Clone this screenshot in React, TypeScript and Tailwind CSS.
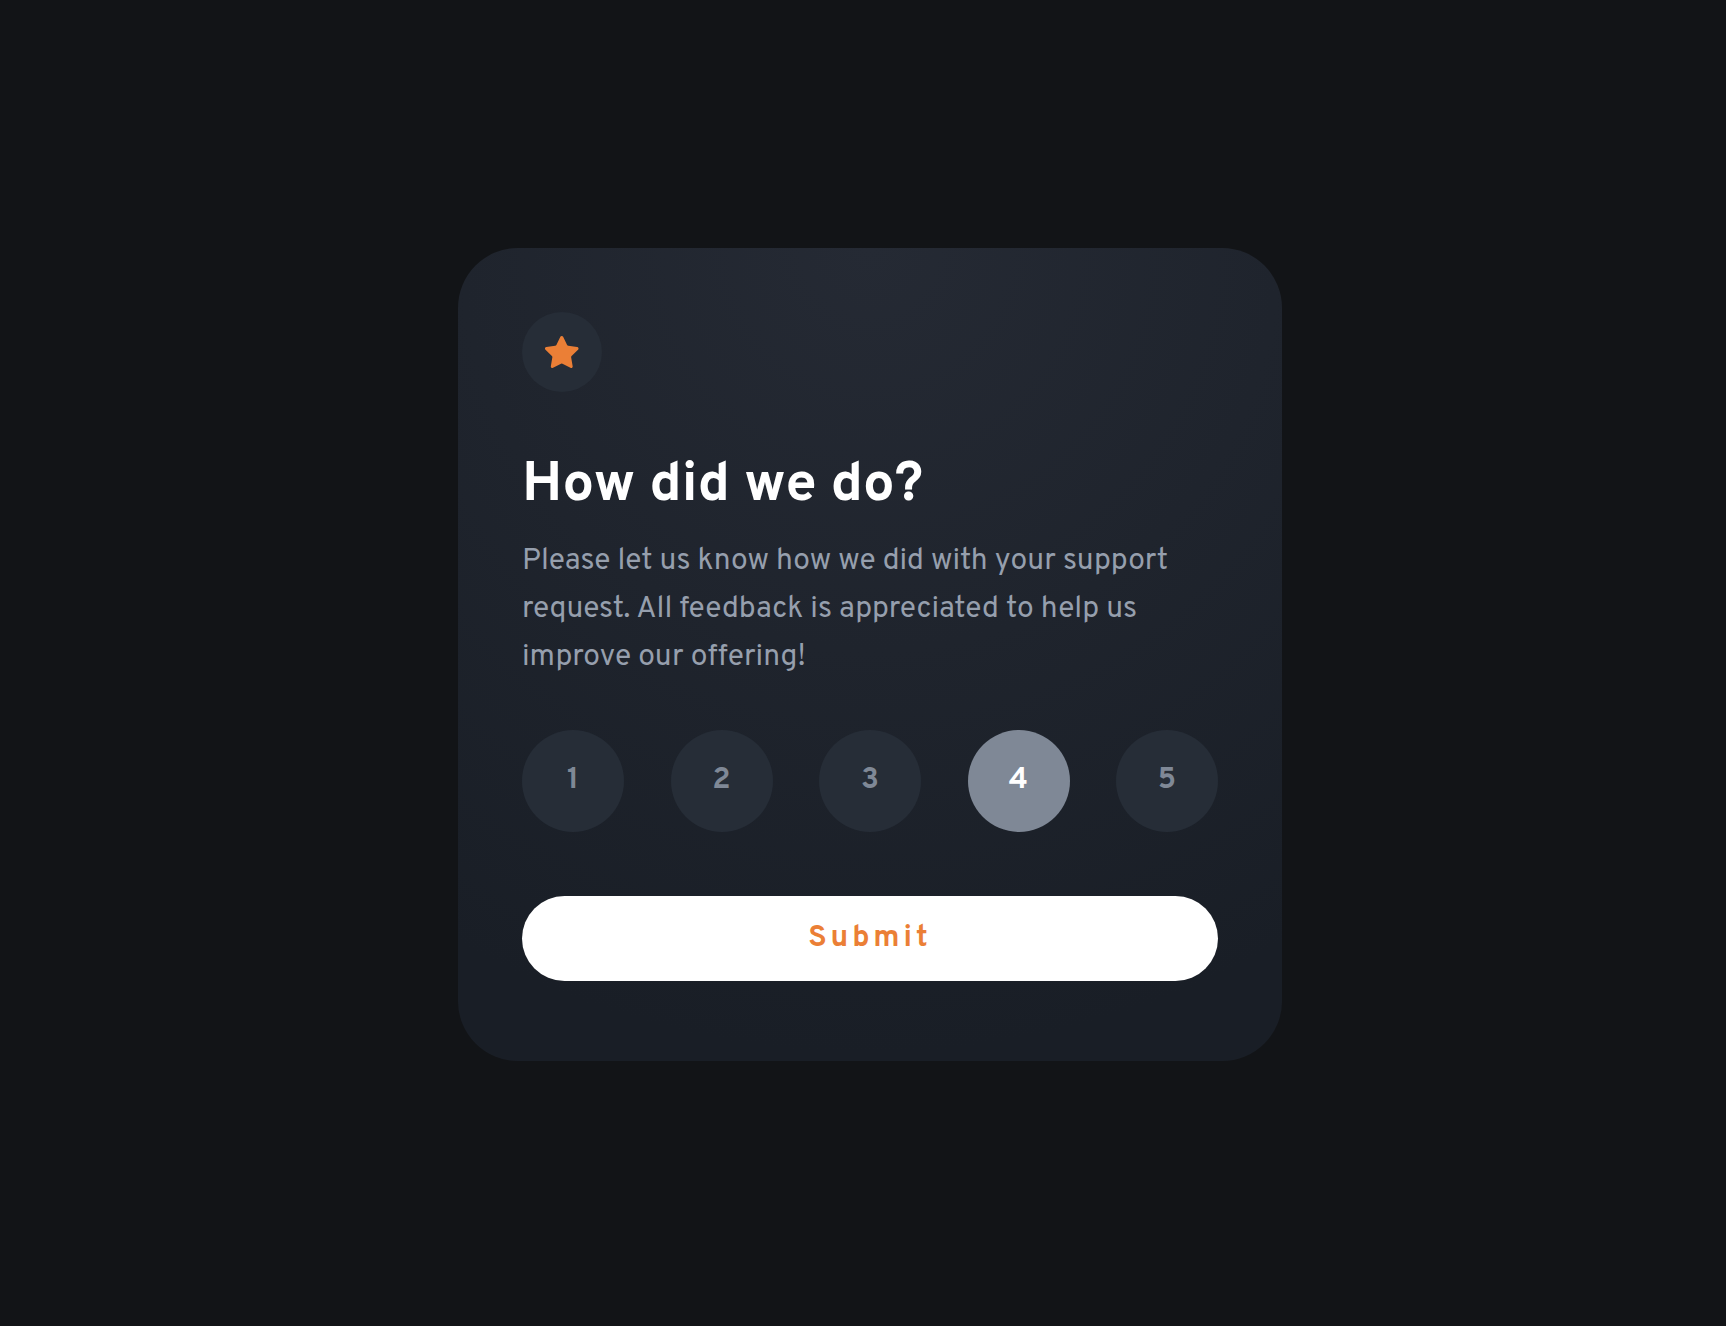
import { useState } from "react";

const ratings = [1, 2, 3, 4, 5];

function StarIcon() {
  return (
    <svg viewBox="0 0 17 16" className="h-8 w-[34px]" fill="#eb7f36" aria-hidden="true">
      <path d="m9.067.43 1.99 4.031c.112.228.33.386.58.422l4.45.647a.772.772 0 0 1 .427 1.316l-3.22 3.138a.773.773 0 0 0-.222.683l.76 4.431a.772.772 0 0 1-1.12.813l-3.98-2.092a.773.773 0 0 0-.718 0l-3.98 2.092a.772.772 0 0 1-1.119-.813l.76-4.431a.77.77 0 0 0-.222-.683L.233 6.846A.772.772 0 0 1 .661 5.53l4.449-.647a.772.772 0 0 0 .58-.422L7.68.43a.774.774 0 0 1 1.387 0Z" />
    </svg>
  );
}

export default function App() {
  const [selected, setSelected] = useState(4);

  return (
    <main className="flex min-h-screen items-center justify-center bg-[#121417] pb-4.5 pl-3.5 font-['Overpass','Roboto',sans-serif]">
      <form
        onSubmit={(e) => e.preventDefault()}
        className="w-full max-w-[824px] rounded-[60px] bg-[radial-gradient(99%_99%_at_50%_0%,#252a34_0%,#191e26_100%)] px-16 pt-16 pb-20"
      >
        <div className="flex size-20 items-center justify-center rounded-full bg-[#262d37]">
          <StarIcon />
        </div>
        <h1 className="mt-[58px] text-[56px] leading-[72px] font-bold text-white">How did we do?</h1>
        <p className="mt-4 text-[30px] leading-[48px] text-[#969fad]">
          Please let us know how we did with your support
          <br />
          request. All feedback is appreciated to help us
          <br />
          improve our offering!
        </p>
        <div className="mt-12 flex justify-between" role="group" aria-label="Rating">
          {ratings.map((n) => (
            <button
              key={n}
              type="button"
              aria-pressed={selected === n}
              onClick={() => setSelected(n)}
              className={
                "size-[102px] rounded-full text-[30px] font-bold " +
                (selected === n ? "bg-[#7f8896] text-white" : "bg-[#262d37] text-[#7f8896]")
              }
            >
              {n}
            </button>
          ))}
        </div>
        <button
          type="submit"
          className="mt-16 block h-[85px] w-full rounded-full bg-white text-[30px] font-bold tracking-[4px] text-[#eb7f36]"
        >
          Submit
        </button>
      </form>
    </main>
  );
}
